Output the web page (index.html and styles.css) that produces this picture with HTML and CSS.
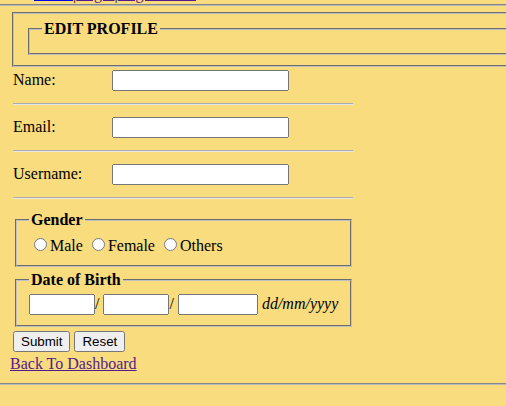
FILE: index.html
```html
<!DOCTYPE html>
<html lang="en">
<head>
<meta charset="utf-8">
<title>Edit Profile</title>
<link rel="stylesheet" href="styles.css">
</head>
<body>
<nav class="topnav"><a href="#" class="nav-link">Home</a>|<a href="#" class="nav-link visited">Login</a>|<a href="#" class="nav-link visited">Registration</a></nav>
<hr class="full-rule top-rule">
<main class="page">
  <fieldset class="frame">
    <fieldset class="title-box">
      <legend class="title">EDIT PROFILE</legend>
    </fieldset>
  </fieldset>

  <form class="profile-form">
    <div class="field"><label class="field-label" for="name">Name:</label><input class="text-input" type="text" id="name"></div>
    <hr class="sep">
    <div class="field"><label class="field-label" for="email">Email:</label><input class="text-input" type="text" id="email"></div>
    <hr class="sep">
    <div class="field"><label class="field-label" for="username">Username:</label><input class="text-input" type="text" id="username"></div>
    <hr class="sep">

    <fieldset class="group">
      <legend class="group-title">Gender</legend>
      <input type="radio" name="gender" class="radio"><span>Male</span> <input type="radio" name="gender" class="radio"><span>Female</span> <input type="radio" name="gender" class="radio"><span>Others</span>
    </fieldset>

    <fieldset class="group group-dob">
      <legend class="group-title">Date of Birth</legend>
      <input type="text" class="date-input date-short">/ <input type="text" class="date-input date-short">/ <input type="text" class="date-input date-long"> <span class="hint">dd/mm/yyyy</span>
    </fieldset>

    <div class="actions"><button type="submit" class="btn">Submit</button> <button type="reset" class="btn">Reset</button></div>
  </form>
  <a href="#" class="back-link">Back To Dashboard</a>
</main>
<hr class="full-rule bottom-rule">
</body>
</html>
```

FILE: styles.css
```css
html, body {
  margin: 0;
  padding: 0;
}

body {
  background: #f8dc7e;
  color: #000;
  font-family: "Liberation Serif", "Times New Roman", serif;
  font-size: 16px;
  overflow: hidden;
}

.topnav {
  margin-top: -15px;
  padding-left: 34px;
  line-height: 18px;
  height: 18px;
}

.nav-link {
  color: #0000ee;
}

.nav-link.visited,
.back-link {
  color: #551a8b;
}

.full-rule {
  margin: 0;
  height: 0;
  border: 0;
  border-top: 1px solid #858585;
  border-bottom: 1px solid #b9b9b9;
}

.top-rule {
  margin-top: 1px;
  margin-bottom: 6px;
}

.bottom-rule {
  margin-top: 10px;
}

.page {
  padding-left: 10px;
  overflow: hidden;
}

fieldset {
  border: 2px groove #c0c0c0;
}

.frame {
  width: 560px;
  margin: 0 2px;
}

.title-box {
  margin: 0 2px;
}

.title {
  font-weight: bold;
}

.profile-form {
  width: 341px;
  margin: 3px 0 0 3px;
}

.field-label {
  display: inline-block;
  width: 99px;
}

.text-input {
  width: 177px;
  box-sizing: border-box;
}

.sep {
  height: 0;
  border: 0;
  border-top: 1px solid #adadad;
  border-bottom: 1px solid #e6e6e6;
  margin: 12px 1px 12px 0;
}

.group {
  margin: 0 2px;
}

.group-dob {
  margin-top: 4px;
  white-space: nowrap;
}

.group-title {
  font-weight: bold;
}

.date-input {
  box-sizing: border-box;
}

.date-short {
  width: 66px;
}

.date-long {
  width: 80px;
}

.hint {
  font-style: italic;
}

.actions {
  margin-top: 4px;
}

.btn {
  font: 13.333px "Liberation Sans", Arial, sans-serif;
}

.back-link {
  display: inline-block;
  margin-top: 3px;
}
```
